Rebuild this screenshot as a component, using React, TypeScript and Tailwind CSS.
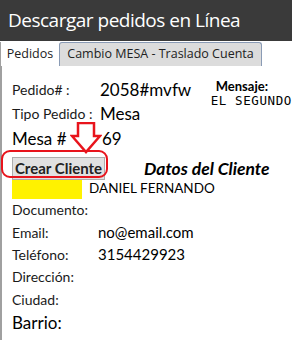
import React from "react";

const label = "text-[14px] text-[#1a1a1a] leading-none";

function Row({ name, value, big }: { name: string; value?: string; big?: boolean }) {
    return (
        <div className="flex items-center h-[22.4px]">
            <span className={big ? "text-[17px] text-black w-[86px] leading-none" : `${label} w-[86px]`}>{name}</span>
            {value ? <span className="text-[15px] text-black leading-none">{value}</span> : null}
        </div>
    );
}

export default function App() {
    return (
        <div className="w-[292px] h-[340px] bg-white overflow-hidden" style={{ fontFamily: "Lato, 'Open Sans', sans-serif" }}>
            <div className="h-[41px] bg-[#3a3a3a] flex items-center pl-[8px]">
                <h1 className="text-white text-[19px] tracking-[-0.5px] leading-none whitespace-nowrap" style={{ fontFamily: "'Open Sans', sans-serif" }}>
                    Descargar pedidos en Línea
                </h1>
            </div>
            <div className="flex items-end h-[25px] pt-[1px]" style={{ fontFamily: "'Open Sans', sans-serif" }}>
                <div className="h-[24px] w-[59px] border-l border-[#a0a0a0] bg-white flex items-center justify-center text-[12.5px] text-[#222]">
                    Pedidos
                </div>
                <div className="h-[24px] w-[203px] bg-[#dcdcdc] border border-b-0 border-[#8a9bb5] rounded-t-[3px] flex items-center justify-center text-[12.5px] text-[#222]">
                    Cambio MESA - Traslado Cuenta
                </div>
            </div>
            <div className="relative h-[274px] border-l-2 border-[#a0a0a0] pl-[10px] pt-[12px]">
                <div className="flex">
                    <div className="w-[200px]">
                        <div className="flex items-center h-[24px]">
                            <span className={`${label} w-[88px]`}>Pedido# :</span>
                            <span className="text-[17px] text-black">2058#mvfw</span>
                        </div>
                        <div className="flex items-center h-[24px]">
                            <span className={`${label} w-[88px]`}>Tipo Pedido :</span>
                            <span className="text-[17px] text-black">Mesa</span>
                        </div>
                        <div className="flex items-center h-[26px]">
                            <span className="text-[17px] text-black w-[90px]">Mesa #</span>
                            <span className="text-[17px] text-black">69</span>
                        </div>
                    </div>
                    <div>
                        <div className="text-[13px] font-bold text-black pl-[5px] leading-[16px]">Mensaje:</div>
                        <div className="text-[12.5px] text-black tracking-[0.6px] whitespace-nowrap leading-[14px]" style={{ fontFamily: "'DejaVu Sans Mono', monospace" }}>
                            EL SEGUNDO
                        </div>
                    </div>
                </div>
                <div className="flex items-end h-[26px] mt-[2px]">
                    <button className="h-[23px] w-[93px] px-0 bg-[#e1e1e1] border border-[#adadad] text-[15px] font-bold text-[#222] whitespace-nowrap leading-none">
                        Crear Cliente
                    </button>
                    <span className="ml-[39px] text-[17.5px] font-bold italic text-black leading-none mb-[3px]">Datos del Cliente</span>
                </div>
                <div className="flex items-center h-[20px] -mt-[1px]">
                    <div className="w-[70px] h-[19px] bg-[#fff200]"></div>
                    <span className="ml-[7px] text-[13.5px] text-black leading-none">DANIEL FERNANDO</span>
                </div>
                <div>
                    <Row name="Documento:" />
                    <Row name="Email:" value="no@email.com" />
                    <Row name="Teléfono:" value="3154429923" />
                    <Row name="Dirección:" />
                    <Row name="Ciudad:" />
                    <Row name="Barrio:" big />
                </div>

                <div className="absolute left-[-1px] top-[84px] w-[107px] h-[28px] border-2 border-[#e8141c] rounded-[9px]"></div>
                <svg className="absolute left-[68px] top-[56px]" width="32" height="32" viewBox="0 0 32 32">
                    <path d="M8 1 H24 V14 H30 L16 30 L2 14 H8 Z" fill="white" stroke="#e8141c" strokeWidth="2.5" strokeLinejoin="miter" />
                </svg>
            </div>
        </div>
    );
}
